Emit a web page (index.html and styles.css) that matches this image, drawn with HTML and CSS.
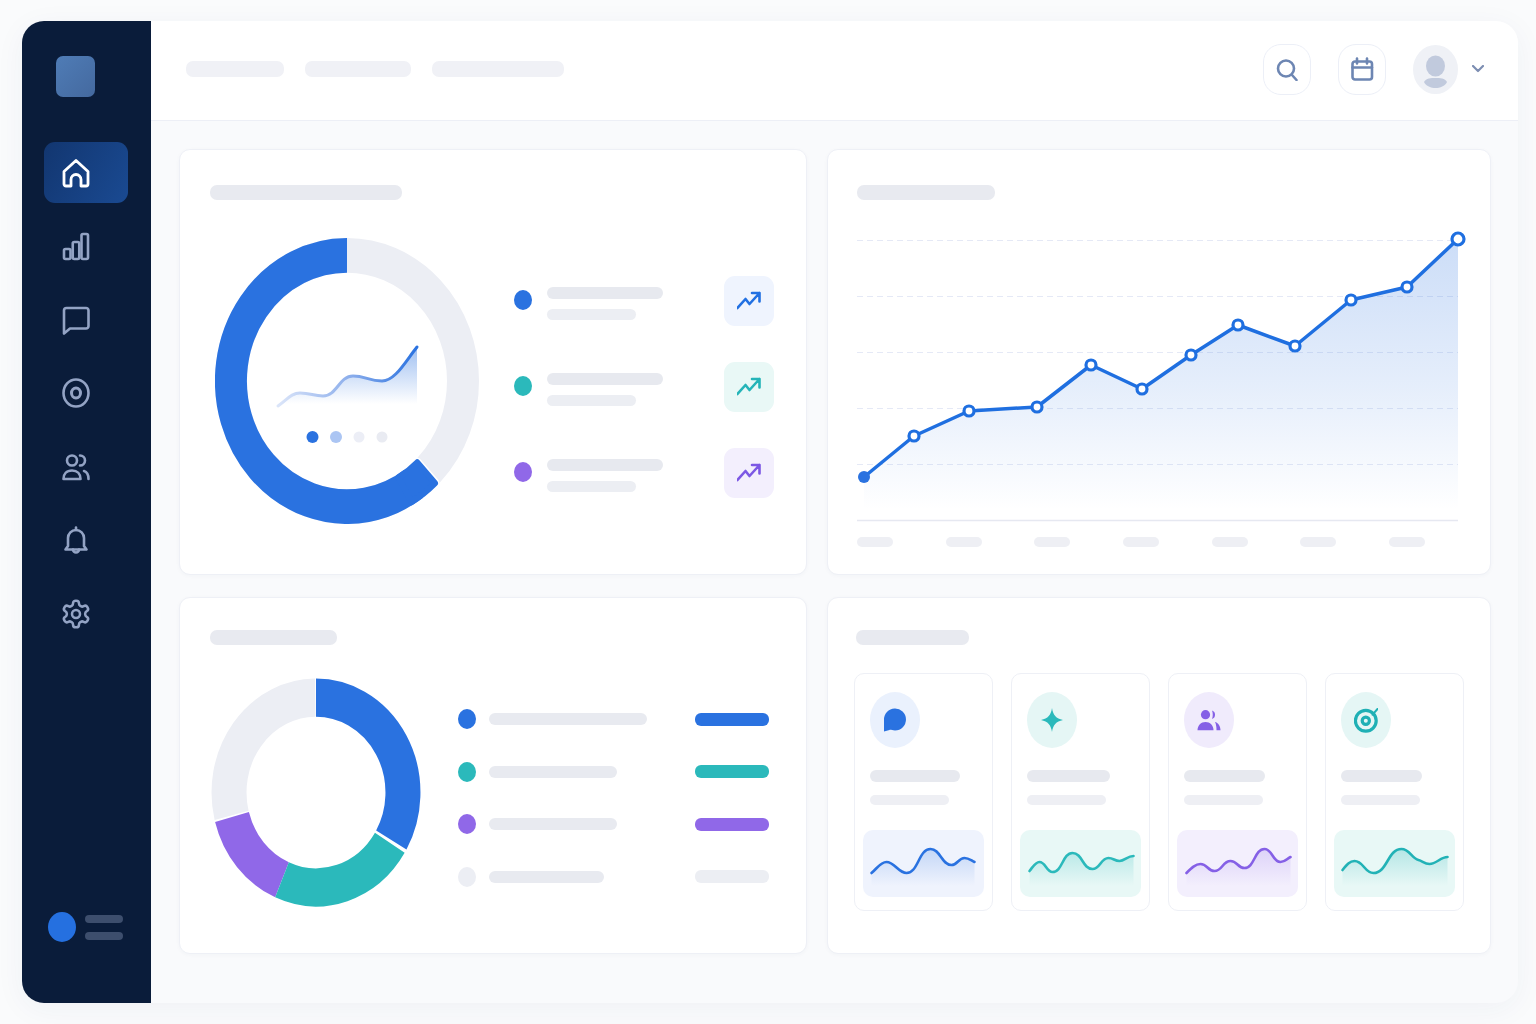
FILE: index.html
```html
<!DOCTYPE html>
<html lang="en">
<head>
    <meta charset="UTF-8">
    <meta name="viewport" content="width=device-width, initial-scale=1.0">
    <title>Dashboard</title>
    <link rel="stylesheet" href="styles.css">
</head>
<body>
    <div class="shell">
        <aside class="sidebar">
            <div class="logo"></div>
            <nav class="nav">
                <a class="nav-item active">
                    <svg width="32" height="32" viewBox="0 0 32 32"><path d="M4 14.500 16 3.500l12 11V27a2 2 0 0 1-2 2h-5v-6.500a5 5 0 0 0-10 0V29H6a2 2 0 0 1-2-2z"/></svg>
                </a>
                <a class="nav-item">
                    <svg width="32" height="32" viewBox="0 0 32 32"><rect x="4" y="19" width="6.500" height="10" rx="1.500"/><rect x="12.750" y="12" width="6.500" height="17" rx="1.500"/><rect x="21.500" y="4" width="6.500" height="25" rx="1.500"/></svg>
                </a>
                <a class="nav-item">
                    <svg width="32" height="32" viewBox="0 0 32 32"><path d="M4 6.500a2.500 2.500 0 0 1 2.500-2.500H26a2.500 2.500 0 0 1 2.500 2.500v15.500a2.500 2.500 0 0 1-2.500 2.500H10L4 29.500z"/></svg>
                </a>
                <a class="nav-item">
                    <svg width="32" height="32" viewBox="0 0 32 32"><ellipse cx="16" cy="16" rx="12.500" ry="13.500"/><ellipse cx="16" cy="16" rx="4.500" ry="5" stroke-width="3"/></svg>
                </a>
                <a class="nav-item">
                    <svg width="32" height="32" viewBox="0 0 32 32"><circle cx="12" cy="9.500" r="5"/><path d="M3.500 28c0-5 3-8.500 8.500-8.500s8.500 3.500 8.500 8.500z"/><path d="M20 4.500a5 5 0 0 1 0 10"/><path d="M24 20c3 1 4.500 4 4.500 8"/></svg>
                </a>
                <a class="nav-item">
                    <svg width="32" height="32" viewBox="0 0 32 32"><path d="M16 3.500V6"/><path d="M8 22v-8a8 8 0 0 1 16 0v8l2.500 3.500h-21z"/><path d="M13 25.500a3 3 0 0 0 6 0"/></svg>
                </a>
                <a class="nav-item">
                    <svg class="gear" width="32" height="32" viewBox="0 0 24 24"><path d="M12.220 2h-.44a2 2 0 0 0-2 2v.18a2 2 0 0 1-1 1.730l-.43.25a2 2 0 0 1-2 0l-.15-.08a2 2 0 0 0-2.730.73l-.22.38a2 2 0 0 0 .73 2.730l.15.1a2 2 0 0 1 1 1.720v.51a2 2 0 0 1-1 1.740l-.15.09a2 2 0 0 0-.73 2.730l.22.38a2 2 0 0 0 2.730.73l.15-.08a2 2 0 0 1 2 0l.43.25a2 2 0 0 1 1 1.730V20a2 2 0 0 0 2 2h.44a2 2 0 0 0 2-2v-.18a2 2 0 0 1 1-1.730l.43-.25a2 2 0 0 1 2 0l.15.08a2 2 0 0 0 2.730-.73l.22-.39a2 2 0 0 0-.73-2.730l-.15-.08a2 2 0 0 1-1-1.740v-.5a2 2 0 0 1 1-1.740l.15-.09a2 2 0 0 0 .73-2.730l-.22-.38a2 2 0 0 0-2.730-.73l-.15.08a2 2 0 0 1-2 0l-.43-.25a2 2 0 0 1-1-1.730V4a2 2 0 0 0-2-2z"/><circle cx="12" cy="12" r="3"/></svg>
                </a>
            </nav>
            <div class="side-user">
                <span class="side-dot"></span>
                <div class="side-lines"><span></span><span></span></div>
            </div>
        </aside>

        <div class="content">
            <header class="topbar">
                <div class="crumbs">
                    <span class="crumb crumb-a"></span>
                    <span class="crumb crumb-b"></span>
                    <span class="crumb crumb-c"></span>
                </div>
                <div class="top-actions">
                    <button class="round-btn">
                        <svg width="24" height="24" viewBox="0 0 24 24"><circle cx="11" cy="11.500" r="8"/><path d="M17 18l4.500 5"/></svg>
                    </button>
                    <button class="round-btn">
                        <svg width="24" height="24" viewBox="0 0 24 24"><rect x="2.500" y="4.500" width="19.500" height="18" rx="2.500"/><path d="M2.500 10.500h19.500M7 1.500v5M17 1.500v5"/></svg>
                    </button>
                    <div class="user">
                        <svg class="avatar" width="45" height="49" viewBox="0 0 45 49"><ellipse cx="22.500" cy="21" rx="9.500" ry="10.500"/><path d="M11 37c2-4 7-4 11.500-4S32 33 34 37c-2 4-7 6-11.500 6S13 41 11 37z"/></svg>
                        <svg class="chevron" width="12" height="8" viewBox="0 0 12 8"><path d="M1 1l5 5 5-5"/></svg>
                    </div>
                </div>
            </header>

            <main class="grid">
                <section class="card">
                    <div class="card-title title-a"></div>
                    <div class="overview">
                        <svg class="donut-big" width="264" height="286" viewBox="0 0 264 286">
                            <defs>
                                <linearGradient id="miniLine" x1="0" y1="0" x2="1" y2="0">
                                    <stop offset="0" stop-color="#dbe5f9"/>
                                    <stop offset="0.5" stop-color="#8fb0ec"/>
                                    <stop offset="1" stop-color="#2a72e0"/>
                                </linearGradient>
                                <linearGradient id="miniFill" gradientUnits="userSpaceOnUse" x1="0" y1="109" x2="0" y2="166">
                                    <stop offset="0" stop-color="#2a72e0" stop-opacity="0.45"/>
                                    <stop offset="1" stop-color="#2a72e0" stop-opacity="0"/>
                                </linearGradient>
                            </defs>
                            <g transform="translate(132 143) scale(1 1.083)">
                                <circle r="116" fill="none" stroke="#eceef4" stroke-width="32"/>
                                <path d="M64.500 111.700A129 129 0 0 0 88 94.300L70.200 75.300A103 103 0 0 1 51.500 89.200Z" fill="#ffffff" stroke="#ffffff" stroke-width="9" stroke-linejoin="round"/>
                                <path d="M0-116A116 116 0 1 0 66.500 95" fill="none" stroke="#2a72e0" stroke-width="32"/>
                                <path d="M64.500 111.700A129 129 0 0 0 88 94.300L70.200 75.300A103 103 0 0 1 51.500 89.200Z" fill="#2a72e0" stroke="#2a72e0" stroke-width="6" stroke-linejoin="round"/>
                            </g>
                            <path d="M63 168c9-6 13-13 22-13 11 0 13 3 23 3 14 0 16-20 30-20 12 0 16 5 29 5 13 0 23-19 35-34v61H63z" fill="url(#miniFill)"/>
                            <path d="M63 168c9-6 13-13 22-13 11 0 13 3 23 3 14 0 16-20 30-20 12 0 16 5 29 5 13 0 23-19 35-34" fill="none" stroke="url(#miniLine)" stroke-width="3" stroke-linecap="round"/>
                            <circle cx="97.500" cy="199" r="6" fill="#2a72e0"/>
                            <circle cx="121" cy="199" r="6" fill="#abc5f3"/>
                            <circle cx="144" cy="199" r="5.500" fill="#eceef6"/>
                            <circle cx="167" cy="199" r="5.500" fill="#e9ebf2"/>
                        </svg>
                        <div class="trend-list">
                            <div class="trend-row">
                                <span class="dot dot-blue"></span>
                                <div class="trend-lines"><span class="line-long"></span><span class="line-short"></span></div>
                                <div class="tile tile-blue">
                                    <svg width="24" height="24" viewBox="0 0 24 24"><path d="M.5 19l8-9 4 5 10-11M15 4h7.500v8.500"/></svg>
                                </div>
                            </div>
                            <div class="trend-row">
                                <span class="dot dot-teal"></span>
                                <div class="trend-lines"><span class="line-long"></span><span class="line-short"></span></div>
                                <div class="tile tile-teal">
                                    <svg width="24" height="24" viewBox="0 0 24 24"><path d="M.5 19l8-9 4 5 10-11M15 4h7.500v8.500"/></svg>
                                </div>
                            </div>
                            <div class="trend-row">
                                <span class="dot dot-purple"></span>
                                <div class="trend-lines"><span class="line-long"></span><span class="line-short"></span></div>
                                <div class="tile tile-purple">
                                    <svg width="24" height="24" viewBox="0 0 24 24"><path d="M.5 19l8-9 4 5 10-11M15 4h7.500v8.500"/></svg>
                                </div>
                            </div>
                        </div>
                    </div>
                </section>

                <section class="card card-chart">
                    <div class="card-title title-b"></div>
                    <svg class="line-chart" width="612" height="292" viewBox="0 0 612 292">
                        <defs>
                            <linearGradient id="areaFill" gradientUnits="userSpaceOnUse" x1="0" y1="9" x2="0" y2="280">
                                <stop offset="0" stop-color="#2a72e0" stop-opacity="0.24"/>
                                <stop offset="0.55" stop-color="#2a72e0" stop-opacity="0.12"/>
                                <stop offset="1" stop-color="#2a72e0" stop-opacity="0"/>
                            </linearGradient>
                        </defs>
                        <g class="grid-lines">
                            <path d="M0 10.500H601M0 66.500H601M0 122.500H601M0 178.500H601M0 234.500H601"/>
                        </g>
                        <path d="M0 290.500H601" stroke="#e6e8f1" stroke-width="1.500"/>
                        <path d="M7 247L57 206 112 181 180 177 234 135 285 159 334 125 381 95 438 116 494 70 550 57 601 9V290H7Z" fill="url(#areaFill)"/>
                        <polyline class="main-line" points="7,247 57,206 112,181 180,177 234,135 285,159 334,125 381,95 438,116 494,70 550,57 601,9"/>
                        <circle class="pt-first" cx="7" cy="247" r="6"/>
                        <g class="pts">
                            <circle cx="57" cy="206" r="5"/>
                            <circle cx="112" cy="181" r="5"/>
                            <circle cx="180" cy="177" r="5"/>
                            <circle cx="234" cy="135" r="5"/>
                            <circle cx="285" cy="159" r="5"/>
                            <circle cx="334" cy="125" r="5"/>
                            <circle cx="381" cy="95" r="5"/>
                            <circle cx="438" cy="116" r="5"/>
                            <circle cx="494" cy="70" r="5"/>
                            <circle cx="550" cy="57" r="5"/>
                            <circle cx="601" cy="9" r="6"/>
                        </g>
                    </svg>
                    <div class="x-labels">
                        <span></span><span></span><span></span><span></span><span></span><span></span><span></span>
                    </div>
                </section>

                <section class="card card-low">
                    <div class="card-title title-c"></div>
                    <div class="breakdown">
                        <svg class="donut-small" width="210" height="229" viewBox="0 0 210 229">
                            <g transform="translate(105 114.500) scale(1 1.090)" fill="none" stroke-width="35">
                                <path d="M-84.400 21A87 87 0 0 1-.8-87" stroke="#eceef4"/>
                                <path d="M0-87A87 87 0 0 1 75.300 43.500" stroke="#2a72e0"/>
                                <path d="M-34 80.100A87 87 0 0 1-84 22.500" stroke="#9068e8"/>
                                <path d="M73.800 46.100A87 87 0 0 1-34 80.100" stroke="#2bb9bb"/>
                            </g>
                        </svg>
                        <div class="share-list">
                            <div class="share-row">
                                <span class="dot dot-blue"></span>
                                <span class="share-label label-1"></span>
                                <span class="share-value value-blue"></span>
                            </div>
                            <div class="share-row">
                                <span class="dot dot-teal"></span>
                                <span class="share-label label-2"></span>
                                <span class="share-value value-teal"></span>
                            </div>
                            <div class="share-row">
                                <span class="dot dot-purple"></span>
                                <span class="share-label label-2"></span>
                                <span class="share-value value-purple"></span>
                            </div>
                            <div class="share-row">
                                <span class="dot dot-grey"></span>
                                <span class="share-label label-3"></span>
                                <span class="share-value value-grey"></span>
                            </div>
                        </div>
                    </div>
                </section>

                <section class="card card-low card-metrics">
                    <div class="card-title title-d"></div>
                    <div class="metrics">
                        <div class="metric">
                            <div class="metric-icon bg-blue">
                                <svg width="24" height="24" viewBox="0 0 24 24" fill="#2a72e0"><path d="M1 23.500V12a11 11 0 1 1 11 10.500c-2.500 0-4-.8-5.500-.6z"/></svg>
                            </div>
                            <div class="metric-line-a wa1"></div>
                            <div class="metric-line-b"></div>
                            <div class="spark bg-blue-soft">
                                <svg viewBox="0 0 120 67">
                                    <defs><linearGradient id="sparkBlue" x1="0" y1="0" x2="0" y2="1"><stop offset="0" stop-color="#2a72e0" stop-opacity="0.22"/><stop offset="1" stop-color="#2a72e0" stop-opacity="0"/></linearGradient></defs>
                                    <path d="M8 43C14 38 17 32 23 32C31 32 35 43 43 43C55 43 55 19 67 19C77 19 78 35 88 35C94 35 95 28 101 28C105 28 107 30 111 32V56H8Z" fill="url(#sparkBlue)"/>
                                    <path d="M8 43C14 38 17 32 23 32C31 32 35 43 43 43C55 43 55 19 67 19C77 19 78 35 88 35C94 35 95 28 101 28C105 28 107 30 111 32" class="spark-line" stroke="#2a72e0"/>
                                </svg>
                            </div>
                        </div>
                        <div class="metric">
                            <div class="metric-icon bg-teal">
                                <svg width="24" height="24" viewBox="0 0 24 24" fill="#2bb9bb"><path d="M12 0C13 7 16 10.500 23 12C16 13.500 13 17 12 24C11 17 8 13.500 1 12C8 10.500 11 7 12 0Z"/></svg>
                            </div>
                            <div class="metric-line-a wa2"></div>
                            <div class="metric-line-b"></div>
                            <div class="spark bg-teal-soft">
                                <svg viewBox="0 0 120 67">
                                    <defs><linearGradient id="sparkTeal" x1="0" y1="0" x2="0" y2="1"><stop offset="0" stop-color="#2bb9bb" stop-opacity="0.24"/><stop offset="1" stop-color="#2bb9bb" stop-opacity="0"/></linearGradient></defs>
                                    <path d="M9 41C13 36 15 32 19 32C25 32 26 42 32 42C42 42 42 23 52 23C62 23 62 39 72 39C80 39 80 28 88 28C93 28 94 31 99 31C104 31 107 26 113 26V56H9Z" fill="url(#sparkTeal)"/>
                                    <path d="M9 41C13 36 15 32 19 32C25 32 26 42 32 42C42 42 42 23 52 23C62 23 62 39 72 39C80 39 80 28 88 28C93 28 94 31 99 31C104 31 107 26 113 26" class="spark-line" stroke="#2bb9bb"/>
                                </svg>
                            </div>
                        </div>
                        <div class="metric">
                            <div class="metric-icon bg-purple">
                                <svg width="24" height="24" viewBox="0 0 24 24" fill="#8560e6"><circle cx="8.500" cy="6.700" r="4.600"/><path d="M.5 22.300c0-5 3.500-8.300 8-8.300s8 3.300 8 8.300z"/><path d="M15 2.500a4.500 4.500 0 0 1 0 8.500c1-2.500 1-6 0-8.500z"/><path d="M18 14c3 .5 5.500 4 5.500 8.300h-4c0-3-.3-6-1.500-8.300z"/></svg>
                            </div>
                            <div class="metric-line-a wa3"></div>
                            <div class="metric-line-b"></div>
                            <div class="spark bg-purple-soft">
                                <svg viewBox="0 0 120 67">
                                    <defs><linearGradient id="sparkPurple" x1="0" y1="0" x2="0" y2="1"><stop offset="0" stop-color="#8560e6" stop-opacity="0.2"/><stop offset="1" stop-color="#8560e6" stop-opacity="0"/></linearGradient></defs>
                                    <path d="M9 43C14 38 18 34 23 34C30 34 30 41 37 41C45 41 45 31 53 31C60 31 60 38 67 38C77 38 77 19 87 19C95 19 95 32 103 32C108 32 109 29 113 27V56H9Z" fill="url(#sparkPurple)"/>
                                    <path d="M9 43C14 38 18 34 23 34C30 34 30 41 37 41C45 41 45 31 53 31C60 31 60 38 67 38C77 38 77 19 87 19C95 19 95 32 103 32C108 32 109 29 113 27" class="spark-line" stroke="#8560e6"/>
                                </svg>
                            </div>
                        </div>
                        <div class="metric">
                            <div class="metric-icon bg-teal">
                                <svg class="target" width="24" height="26" viewBox="0 0 24 26"><circle cx="11.800" cy="13.700" r="10.400"/><circle cx="11.800" cy="13.700" r="3.600"/><path d="M18.500 7.700l5-5.700" stroke-width="2"/></svg>
                            </div>
                            <div class="metric-line-a wa3"></div>
                            <div class="metric-line-b"></div>
                            <div class="spark bg-teal-soft">
                                <svg viewBox="0 0 120 67">
                                    <defs><linearGradient id="sparkCyan" x1="0" y1="0" x2="0" y2="1"><stop offset="0" stop-color="#22b2b6" stop-opacity="0.26"/><stop offset="1" stop-color="#22b2b6" stop-opacity="0"/></linearGradient></defs>
                                    <path d="M8 40C12 35 15 31 20 31C29 31 30 43 39 43C53 43 53 19 67 19C75 19 77 28 84 30C88 31 90 34 95 34C102 34 106 27 113 27V56H8Z" fill="url(#sparkCyan)"/>
                                    <path d="M8 40C12 35 15 31 20 31C29 31 30 43 39 43C53 43 53 19 67 19C75 19 77 28 84 30C88 31 90 34 95 34C102 34 106 27 113 27" class="spark-line" stroke="#22b2b6"/>
                                </svg>
                            </div>
                        </div>
                    </div>
                </section>
            </main>
        </div>
    </div>
</body>
</html>
```

FILE: styles.css
```css
* {
    box-sizing: border-box;
}
body {
    margin: 0;
    height: 100vh;
    overflow: hidden;
    background-color: #fafbfc;
    font-family: "Liberation Sans", Arial, sans-serif;
}
.shell {
    display: flex;
    width: 1496px;
    height: 982px;
    margin: 21px 0 0 22px;
    border-radius: 22px;
    overflow: hidden;
    background: #f9fafc;
    box-shadow: 0 6px 30px rgba(40, 60, 110, 0.05);
}

/* sidebar */
.sidebar {
    display: flex;
    flex-direction: column;
    flex: 0 0 129px;
    background: #0a1c3a;
}
.logo {
    width: 39px;
    height: 41px;
    margin: 35px 0 0 34px;
    border-radius: 7px;
    background: linear-gradient(135deg, #4f7cb6, #44699f);
}
.nav {
    display: flex;
    flex-direction: column;
    gap: 12.5px;
    margin: 45px 0 0 22px;
}
.nav-item {
    display: flex;
    align-items: center;
    width: 84px;
    height: 61px;
    padding-left: 16px;
    border-radius: 11px;
}
.nav-item svg {
    fill: none;
    stroke: #93a3c4;
    stroke-width: 2.6;
    stroke-linecap: round;
    stroke-linejoin: round;
}
.nav-item .gear {
    stroke-width: 1.9;
}
.nav-item.active {
    background: linear-gradient(120deg, #123670, #1a4a92);
}
.nav-item.active svg {
    stroke: #ffffff;
    stroke-width: 2.8;
}
.side-user {
    display: flex;
    align-items: center;
    gap: 9px;
    margin: auto 0 61px 26px;
}
.side-dot {
    width: 28px;
    height: 30px;
    border-radius: 50%;
    background: #2570e0;
}
.side-lines {
    display: flex;
    flex-direction: column;
    gap: 9px;
}
.side-lines span {
    width: 38px;
    height: 8px;
    border-radius: 4px;
    background: #3d4e6d;
}

/* top bar */
.content {
    flex: 1;
    display: flex;
    flex-direction: column;
}
.topbar {
    display: flex;
    align-items: center;
    justify-content: space-between;
    height: 100px;
    padding: 0 34px 3px 35px;
    background: #ffffff;
    border-bottom: 1.5px solid #edeff6;
}
.crumbs {
    display: flex;
    gap: 21px;
}
.crumb {
    height: 16px;
    border-radius: 7px;
    background: #f0f1f6;
}
.crumb-a {
    width: 98px;
}
.crumb-b {
    width: 106px;
}
.crumb-c {
    width: 132px;
}
.top-actions {
    display: flex;
    align-items: center;
    gap: 27px;
}
.round-btn {
    display: flex;
    align-items: center;
    justify-content: center;
    width: 48px;
    height: 51px;
    padding: 0;
    border: 1px solid #eceff7;
    border-radius: 18px;
    background: #ffffff;
}
.round-btn svg {
    fill: none;
    stroke: #6d86b3;
    stroke-width: 2.6;
    stroke-linecap: round;
    stroke-linejoin: round;
}
.user {
    display: flex;
    align-items: center;
    gap: 14px;
}
.avatar {
    border-radius: 50%;
    background: #eff1f6;
    fill: #c1cadd;
}
.chevron {
    fill: none;
    stroke: #7d8eb2;
    stroke-width: 2.2;
    stroke-linecap: round;
    stroke-linejoin: round;
}

/* cards */
.grid {
    display: grid;
    grid-template-columns: 628px 664px;
    grid-template-rows: 426px 357px;
    gap: 22px 20px;
    padding: 28px 0 0 28px;
}
.card {
    padding: 35px 0 0 30px;
    background: #ffffff;
    border: 1px solid #eef0f6;
    border-radius: 11px;
    box-shadow: 0 1px 4px rgba(40, 60, 110, 0.03);
}
.card-chart {
    padding-left: 29px;
}
.card-low {
    padding-top: 32px;
}
.card-metrics {
    padding-left: 26px;
}
.card-title {
    height: 15px;
    border-radius: 7px;
    background: #e8eaf0;
}
.title-a {
    width: 192px;
}
.title-b {
    width: 138px;
}
.title-c {
    width: 127px;
}
.title-d {
    width: 113px;
    margin-left: 2px;
}

/* overview card */
.overview {
    display: flex;
    margin-top: 38px;
}
.donut-big {
    flex: none;
    margin-left: 5px;
}
.trend-list {
    display: flex;
    flex-direction: column;
    gap: 36px;
    width: 260px;
    margin: 38px 0 0 35px;
}
.trend-row {
    display: flex;
    align-items: center;
    height: 50px;
}
.dot {
    flex: none;
    width: 18px;
    height: 20px;
    border-radius: 50%;
}
.trend-row .dot {
    margin-bottom: 3px;
}
.dot-blue {
    background: #2a72e0;
}
.dot-teal {
    background: #2bb9bb;
}
.dot-purple {
    background: #9068e8;
}
.dot-grey {
    background: #eceef4;
}
.trend-lines {
    display: flex;
    flex-direction: column;
    gap: 10px;
    margin: 5px 0 0 15px;
}
.trend-lines span {
    height: 11.5px;
    border-radius: 6px;
}
.line-long {
    width: 116px;
    background: #e7e9ef;
}
.line-short {
    width: 89px;
    background: #eceef3;
}
.tile {
    display: flex;
    align-items: center;
    justify-content: center;
    width: 50px;
    height: 50px;
    margin-left: auto;
    border-radius: 11px;
}
.tile svg {
    fill: none;
    stroke-width: 2.6;
    stroke-linecap: round;
    stroke-linejoin: round;
}
.tile-blue {
    background: #eff4fe;
}
.tile-blue svg {
    stroke: #2170e2;
}
.tile-teal {
    background: #e9f8f6;
}
.tile-teal svg {
    stroke: #25b4b8;
}
.tile-purple {
    background: #f3effd;
}
.tile-purple svg {
    stroke: #7c58e4;
}

/* line chart card */
.line-chart {
    display: block;
    margin-top: 30px;
}
.grid-lines path {
    fill: none;
    stroke: #e5e9f6;
    stroke-width: 1;
    stroke-dasharray: 6 4;
}
.main-line {
    fill: none;
    stroke: #1f6fe0;
    stroke-width: 3.5;
    stroke-linejoin: round;
}
.pt-first {
    fill: #2a72e0;
}
.pts circle {
    fill: #ffffff;
    stroke: #1f6fe0;
    stroke-width: 3.2;
}
.x-labels {
    display: flex;
    justify-content: space-between;
    width: 568px;
    margin-top: 15px;
}
.x-labels span {
    width: 36px;
    height: 10px;
    border-radius: 5px;
    background: #eeeff4;
}

/* breakdown card */
.breakdown {
    display: flex;
    margin-top: 33px;
}
.donut-small {
    flex: none;
    margin-left: 1px;
}
.share-list {
    display: flex;
    flex-direction: column;
    gap: 32.6px;
    width: 311px;
    margin: 31px 0 0 37px;
}
.share-row {
    display: flex;
    align-items: center;
    height: 20px;
}
.share-label {
    height: 12px;
    margin-left: 13px;
    border-radius: 6px;
    background: #e8eaf0;
}
.label-1 {
    width: 158px;
}
.label-2 {
    width: 128px;
}
.label-3 {
    width: 115px;
}
.share-value {
    width: 74px;
    height: 13px;
    margin-left: auto;
    border-radius: 6px;
}
.value-blue {
    background: #2a72e0;
}
.value-teal {
    background: #2bb9bb;
}
.value-purple {
    background: #9068e8;
}
.value-grey {
    background: #eceef3;
}

/* metric cards */
.metrics {
    display: grid;
    grid-template-columns: repeat(4, 1fr);
    gap: 18px;
    width: 610px;
    margin-top: 28px;
}
.metric {
    height: 238px;
    padding: 18px 8px 0;
    border: 1px solid #eef0f6;
    border-radius: 10px;
}
.metric-icon {
    display: flex;
    align-items: center;
    justify-content: center;
    width: 50px;
    height: 56px;
    margin-left: 7px;
    border-radius: 50%;
}
.bg-blue {
    background: #eaf1fd;
}
.bg-teal {
    background: #e5f6f5;
}
.bg-purple {
    background: #f0ebfc;
}
.target {
    fill: none;
    stroke: #1fb0b5;
    stroke-width: 3.2;
    stroke-linecap: round;
}
.metric-line-a {
    height: 12px;
    margin: 22px 0 0 7px;
    border-radius: 6px;
    background: #e7e9ef;
}
.wa1 {
    width: 90px;
}
.wa2 {
    width: 83px;
}
.wa3 {
    width: 81px;
}
.metric-line-b {
    width: 79px;
    height: 10px;
    margin: 13px 0 0 7px;
    border-radius: 5px;
    background: #eeeff4;
}
.spark {
    height: 67px;
    margin-top: 25px;
    border-radius: 10px;
}
.spark svg {
    display: block;
    width: 100%;
    height: 100%;
}
.spark-line {
    fill: none;
    stroke-width: 2.6;
    stroke-linecap: round;
}
.bg-blue-soft {
    background: #eff3fd;
}
.bg-teal-soft {
    background: #e8f8f6;
}
.bg-purple-soft {
    background: #f3effd;
}
```
